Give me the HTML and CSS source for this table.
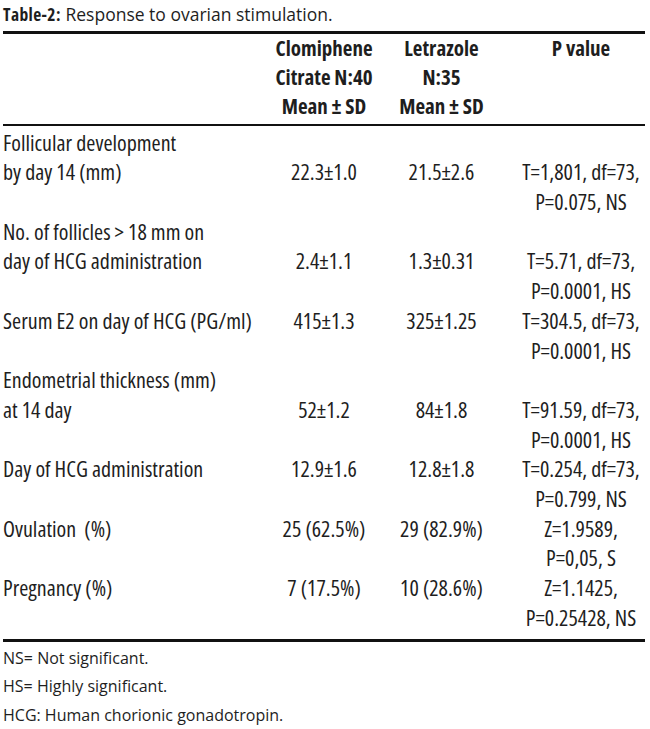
FILE: index.html
```html
<!DOCTYPE html>
<html lang="en">
<head>
<meta charset="utf-8">
<title>Table-2: Response to ovarian stimulation</title>
<link rel="stylesheet" href="styles.css">
</head>
<body>
<div class="wrap">
  <div class="caption"><b>Table-2:</b> Response to ovarian stimulation.</div>
  <table class="tbl">
    <colgroup>
      <col class="c1"><col class="c2"><col class="c3"><col class="c4">
    </colgroup>
    <thead>
      <tr>
        <th></th>
        <th>Clomiphene<br>Citrate N:40<br>Mean ± SD</th>
        <th>Letrazole<br>N:35<br>Mean ± SD</th>
        <th class="pv">P value</th>
      </tr>
    </thead>
    <tbody>
      <tr class="first">
        <td class="lbl">Follicular development<br>by day 14 (mm)</td>
        <td class="drop">22.3±1.0</td>
        <td class="drop">21.5±2.6</td>
        <td class="drop pv">T=1,801, df=73,<br>P=0.075, NS</td>
      </tr>
      <tr>
        <td class="lbl">No. of follicles &gt; 18 mm on<br>day of HCG administration</td>
        <td class="drop">2.4±1.1</td>
        <td class="drop">1.3±0.31</td>
        <td class="drop pv">T=5.71, df=73,<br>P=0.0001, HS</td>
      </tr>
      <tr>
        <td class="lbl">Serum E2 on day of HCG (PG/ml)</td>
        <td>415±1.3</td>
        <td>325±1.25</td>
        <td class="pv">T=304.5, df=73,<br>P=0.0001, HS</td>
      </tr>
      <tr>
        <td class="lbl">Endometrial thickness (mm)<br>at 14 day</td>
        <td class="drop">52±1.2</td>
        <td class="drop">84±1.8</td>
        <td class="drop pv">T=91.59, df=73,<br>P=0.0001, HS</td>
      </tr>
      <tr>
        <td class="lbl">Day of HCG administration</td>
        <td>12.9±1.6</td>
        <td>12.8±1.8</td>
        <td class="pv">T=0.254, df=73,<br>P=0.799, NS</td>
      </tr>
      <tr>
        <td class="lbl">Ovulation &nbsp;(%)</td>
        <td>25 (62.5%)</td>
        <td>29 (82.9%)</td>
        <td class="pv">Z=1.9589,<br>P=0,05, S</td>
      </tr>
      <tr class="last">
        <td class="lbl">Pregnancy (%)</td>
        <td>7 (17.5%)</td>
        <td>10 (28.6%)</td>
        <td class="pv">Z=1.1425,<br>P=0.25428, NS</td>
      </tr>
    </tbody>
  </table>
  <div class="notes">
    <p>NS= Not significant.</p>
    <p>HS= Highly significant.</p>
    <p>HCG: Human chorionic gonadotropin.</p>
  </div>
</div>
</body>
</html>
```

FILE: styles.css
```css
html, body {
  margin: 0;
  padding: 0;
  background: #ffffff;
}

body {
  font-family: "Open Sans", "Roboto", "DejaVu Sans Condensed", sans-serif;
  font-stretch: 75%;
  color: #1e1e1e;
}

.wrap {
  width: 642px;
  padding-left: 3px;
}

.caption {
  font-size: 17.5px;
  font-stretch: 100%;
  line-height: 24px;
  padding-top: 2px;
  padding-bottom: 5px;
  border-bottom: 3px solid #111;
}

.caption b {
  font-weight: 700;
  font-stretch: 87.5%;
  letter-spacing: 0.4px;
}

.tbl {
  width: 642px;
  border-collapse: collapse;
  table-layout: fixed;
}

.c1 { width: 267px; }
.c2 { width: 108px; }
.c3 { width: 127px; }
.c4 { width: 140px; }

.tbl th {
  font-size: 21px;
  font-weight: 700;
  font-stretch: 75%;
  line-height: 29px;
  text-align: center;
  vertical-align: top;
  padding: 0 0 3px 0;
  border-bottom: 2px solid #111;
}

.tbl td {
  font-size: 22px;
  line-height: 29.7px;
  text-align: center;
  vertical-align: top;
  padding: 0;
  white-space: nowrap;
}

.tbl td.lbl {
  text-align: left;
}

.tbl td.drop {
  padding-top: 29.7px;
}

.tbl tr.first td {
  padding-top: 1.6px;
}

.tbl tr.first td.drop {
  padding-top: 31.3px;
}

.tbl th.pv,
.tbl td.pv {
  padding-left: 12px;
}

.tbl tr.last td {
  padding-bottom: 6.5px;
  border-bottom: 3px solid #111;
}

.notes {
  padding-top: 1.5px;
}

.notes p {
  margin: 0;
  font-size: 16px;
  font-stretch: 100%;
  line-height: 28.5px;
}
```
